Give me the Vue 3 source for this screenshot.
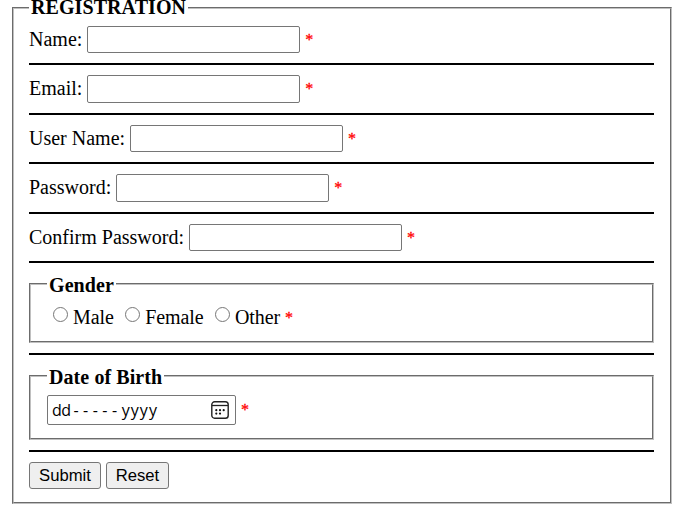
<script setup>
const fields = [
  { label: 'Name:', type: 'text', size: 'first' },
  { label: 'Email:', type: 'text', size: 'tall' },
  { label: 'User Name:', type: 'text', size: 'short' },
  { label: 'Password:', type: 'password', size: 'tall' },
  { label: 'Confirm Password:', type: 'password', size: 'short' },
]
const genders = ['Male', 'Female', 'Other']
</script>

<template>
  <form class="page" @submit.prevent>
    <fieldset class="outer">
      <legend>REGISTRATION</legend>
      <template v-for="f in fields" :key="f.label">
        <label class="row" :class="f.size">
          <span class="name">{{ f.label }}</span>
          <input class="box" :type="f.type" />
          <span class="star">*</span>
        </label>
        <hr />
      </template>

      <fieldset class="group gender">
        <legend>Gender</legend>
        <div class="options">
          <label v-for="g in genders" :key="g" class="option">
            <input type="radio" name="gender" class="radio" />{{ g }}
          </label>
          <span class="star">*</span>
        </div>
      </fieldset>
      <hr />

      <fieldset class="group birth">
        <legend>Date of Birth</legend>
        <div class="dob">
          <div class="date">
            <span class="day">dd</span><span class="month">-----</span><span class="year">yyyy</span>
            <svg class="cal" width="18" height="18" viewBox="0 0 18 18">
              <rect x="0.8" y="0.8" width="16.4" height="16.4" rx="2.8" fill="none" stroke="#222" stroke-width="1.4" />
              <path d="M1 4.5H17" stroke="#222" stroke-width="1.3" />
              <g fill="#111">
                <circle cx="5.3" cy="9.2" r="1.1" /><circle cx="9" cy="9.2" r="1.1" /><circle cx="12.7" cy="9.2" r="1.1" />
                <circle cx="5.3" cy="12.6" r="1.1" /><circle cx="9" cy="12.6" r="1.1" />
              </g>
            </svg>
          </div>
          <span class="star">*</span>
        </div>
      </fieldset>
      <hr />

      <div class="buttons">
        <button type="submit" class="submit">Submit</button>
        <button type="reset" class="reset">Reset</button>
      </div>
    </fieldset>
  </form>
</template>

<style>
body {
  background: #fff;
  overflow: hidden;
}
</style>

<style scoped>
.page {
  display: flow-root;
  font-family: "Liberation Serif", "Times New Roman", serif;
  font-size: 20px;
  line-height: 23px;
  color: #000;
}
fieldset {
  box-sizing: border-box;
  min-width: 0;
  border: 2px groove rgb(192, 192, 192);
}
legend {
  padding: 0 2px;
  height: 23px;
  font-weight: bold;
  line-height: 27px;
  letter-spacing: 0.08px;
}
.outer {
  width: 660px;
  height: 508px;
  margin: -4px 0 0 12px;
  padding: 0 16px 0 15px;
}
.outer > legend { line-height: 23px; }
hr {
  height: 2px;
  margin: 0;
  border: 0;
  background: #000;
}
.row {
  display: flex;
  align-items: flex-start;
  box-sizing: border-box;
  padding-top: 10px;
  line-height: 27px;
}
.first { height: 44px; padding-top: 7px; }
.tall { height: 48px; }
.short { height: 47px; }
.name { margin-right: 5px; }
.box {
  box-sizing: border-box;
  width: 213px;
  height: 27px;
  margin: 0;
  padding: 1px 3px;
  border: 1px solid #767676;
  border-radius: 2px;
  background: #fff;
}
.tall .box { height: 28px; }
.star {
  margin-left: 5px;
  color: #f00;
  font-size: 16px;
  -webkit-text-stroke: 0.3px #f00;
}
.group {
  margin: 9px 0 10px;
  padding: 0 16px;
}
.gender { height: 71px; }
.birth { height: 76px; }
.options {
  display: flex;
  padding: 10px 0 0 6px;
  line-height: 25px;
}
.option {
  display: flex;
  align-items: flex-start;
  letter-spacing: -0.1px;
}
.option + .option { margin-left: 11.5px; }
.radio {
  width: 15px;
  height: 15px;
  margin: 2px 5px 0 0;
}
.dob {
  display: flex;
  line-height: 30px;
}
.date {
  display: flex;
  box-sizing: border-box;
  width: 189px;
  height: 30px;
  padding: 0 6px 0 4px;
  border: 1px solid #767676;
  border-radius: 2px;
  font-family: "Open Sans", sans-serif;
  font-size: 16px;
  line-height: 28px;
}
.day { letter-spacing: -0.6px; }
.month { margin-left: 3px; letter-spacing: 4.5px; }
.year { letter-spacing: 1.1px; }
.cal { margin: 5px 0 0 auto; }
.birth .dob { padding-top: 8px; }
.buttons {
  display: flex;
  gap: 5px;
  padding-top: 10px;
}
button {
  box-sizing: border-box;
  height: 27px;
  padding: 0;
  border: 1px solid #767676;
  border-radius: 3px;
  background: #efefef;
  color: #000;
  font: 16.67px/24px "Liberation Sans", Arial, sans-serif;
}
.submit { width: 72px; }
.reset { width: 63px; }
</style>
